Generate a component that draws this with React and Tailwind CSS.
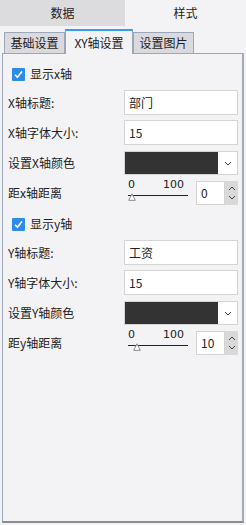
import React from "react";

const font = { fontFamily: '"Noto Sans CJK SC", "Noto Sans", sans-serif' };

function Check({ label }) {
  return (
    <div className="flex items-center h-[22px] pl-[9px]">
      <div className="w-[13px] h-[13px] bg-[#2d8ceb] rounded-[1px] flex items-center justify-center">
        <svg width="11" height="11" viewBox="0 0 11 11">
          <path d="M2 5.8 L4.4 8.2 L9 2.6" stroke="white" strokeWidth="1.6" fill="none" />
        </svg>
      </div>
      <span className="ml-[5px] text-[12px] text-[#222]">{label}</span>
    </div>
  );
}

function Row({ label, children, h = 25 }) {
  return (
    <div className="flex items-center" style={{ height: h }}>
      <div className="w-[121px] pl-[5px] text-[12px] text-[#222] whitespace-nowrap">{label}</div>
      <div className="flex-1 pr-[4px]">{children}</div>
    </div>
  );
}

function TextInput({ value }) {
  return (
    <div className="h-[25px] bg-white border border-[#d4d4d4] flex items-center pl-[4px] text-[12px] text-[#222]">
      {value}
    </div>
  );
}

function ColorPick() {
  return (
    <div className="h-[24px] flex border border-[#d4d4d4] bg-white">
      <div className="flex-1 bg-[#333333]" />
      <div className="w-[19px] flex items-center justify-center">
        <svg width="8" height="5" viewBox="0 0 8 5">
          <path d="M1 1 L4 4 L7 1" stroke="#444" strokeWidth="1" fill="none" />
        </svg>
      </div>
    </div>
  );
}

function SliderSpin({ value, pos }) {
  return (
    <div className="flex items-center h-[24px]">
      <div className="relative w-[60px] h-[26px] ml-[4px]" style={{ fontFamily: '"DejaVu Sans", sans-serif' }}>
        <span className="absolute left-0 top-[-3px] text-[11px] text-[#222]">0</span>
        <span className="absolute right-[4px] top-[-3px] text-[11px] text-[#222]">100</span>
        <div className="absolute left-0 right-0 top-[15px] h-px bg-[#222]" />
        <svg className="absolute top-[13px]" style={{ left: pos }} width="8" height="8" viewBox="0 0 8 8">
          <path d="M4 0.8 L7.3 7.3 L0.7 7.3 Z" fill="white" stroke="#888" strokeWidth="1" />
        </svg>
      </div>
      <div className="ml-[8px] flex h-[24px] w-[42px]">
        <div className="flex-1 bg-white border border-[#d4d4d4] flex items-center pl-[4px] text-[12px] text-[#222]">
          {value}
        </div>
        <div className="w-[13px] bg-[#d9d9d9] flex flex-col items-center justify-center gap-[4px]">
          <svg width="8" height="5" viewBox="0 0 8 5">
            <path d="M1 4 L4 1 L7 4" stroke="#444" strokeWidth="1" fill="none" />
          </svg>
          <svg width="8" height="5" viewBox="0 0 8 5">
            <path d="M1 1 L4 4 L7 1" stroke="#444" strokeWidth="1" fill="none" />
          </svg>
        </div>
      </div>
    </div>
  );
}

export default function App() {
  return (
    <div className="w-[246px] h-[525px] bg-[#f3f3f5] flex flex-col" style={font}>
      <div className="flex h-[26px]">
        <div className="w-[125px] bg-[#dcdcdf] flex items-center justify-center text-[12px] text-[#222]">数据</div>
        <div className="flex-1 bg-[#f3f3f5] flex items-center justify-center text-[12px] text-[#222]">样式</div>
      </div>
      <div className="flex items-end h-[27px] pl-[4px] mt-0">
        <div className="w-[61px] h-[21px] bg-[#dadade] border border-b-0 border-[#9ba6b8] flex items-center justify-center text-[12px] text-[#222]">基础设置</div>
        <div className="w-[68px] h-[25px] bg-[#f3f3f5] border-x border-[#9ba6b8] border-t-2 border-t-[#3a9ee8] flex items-center justify-center text-[12px] text-[#222] relative z-10 -mb-px">XY轴设置</div>
        <div className="w-[61px] h-[21px] bg-[#dadade] border border-b-0 border-[#9ba6b8] flex items-center justify-center text-[12px] text-[#222]">设置图片</div>
      </div>
      <div className="mx-[2px] h-[470px] border border-[#9ba6b8] border-b-2 border-b-[#8a8d93] border-r-2 border-r-[#a3abbb] flex flex-col pt-[9px]">
        <Check label="显示x轴" />
        <div className="h-[5px]" />
        <Row label="X轴标题:"><TextInput value="部门" /></Row>
        <div className="h-[5px]" />
        <Row label="X轴字体大小:"><TextInput value="15" /></Row>
        <div className="h-[6px]" />
        <Row label="设置X轴颜色" h={24}><ColorPick /></Row>
        <div className="h-[6px]" />
        <Row label="距x轴距离" h={24}><SliderSpin value="0" pos={0} /></Row>
        <div className="h-[8px]" />
        <Check label="显示y轴" />
        <div className="h-[5px]" />
        <Row label="Y轴标题:"><TextInput value="工资" /></Row>
        <div className="h-[5px]" />
        <Row label="Y轴字体大小:"><TextInput value="15" /></Row>
        <div className="h-[6px]" />
        <Row label="设置Y轴颜色" h={24}><ColorPick /></Row>
        <div className="h-[6px]" />
        <Row label="距y轴距离" h={24}><SliderSpin value="10" pos={5} /></Row>
      </div>
    </div>
  );
}
